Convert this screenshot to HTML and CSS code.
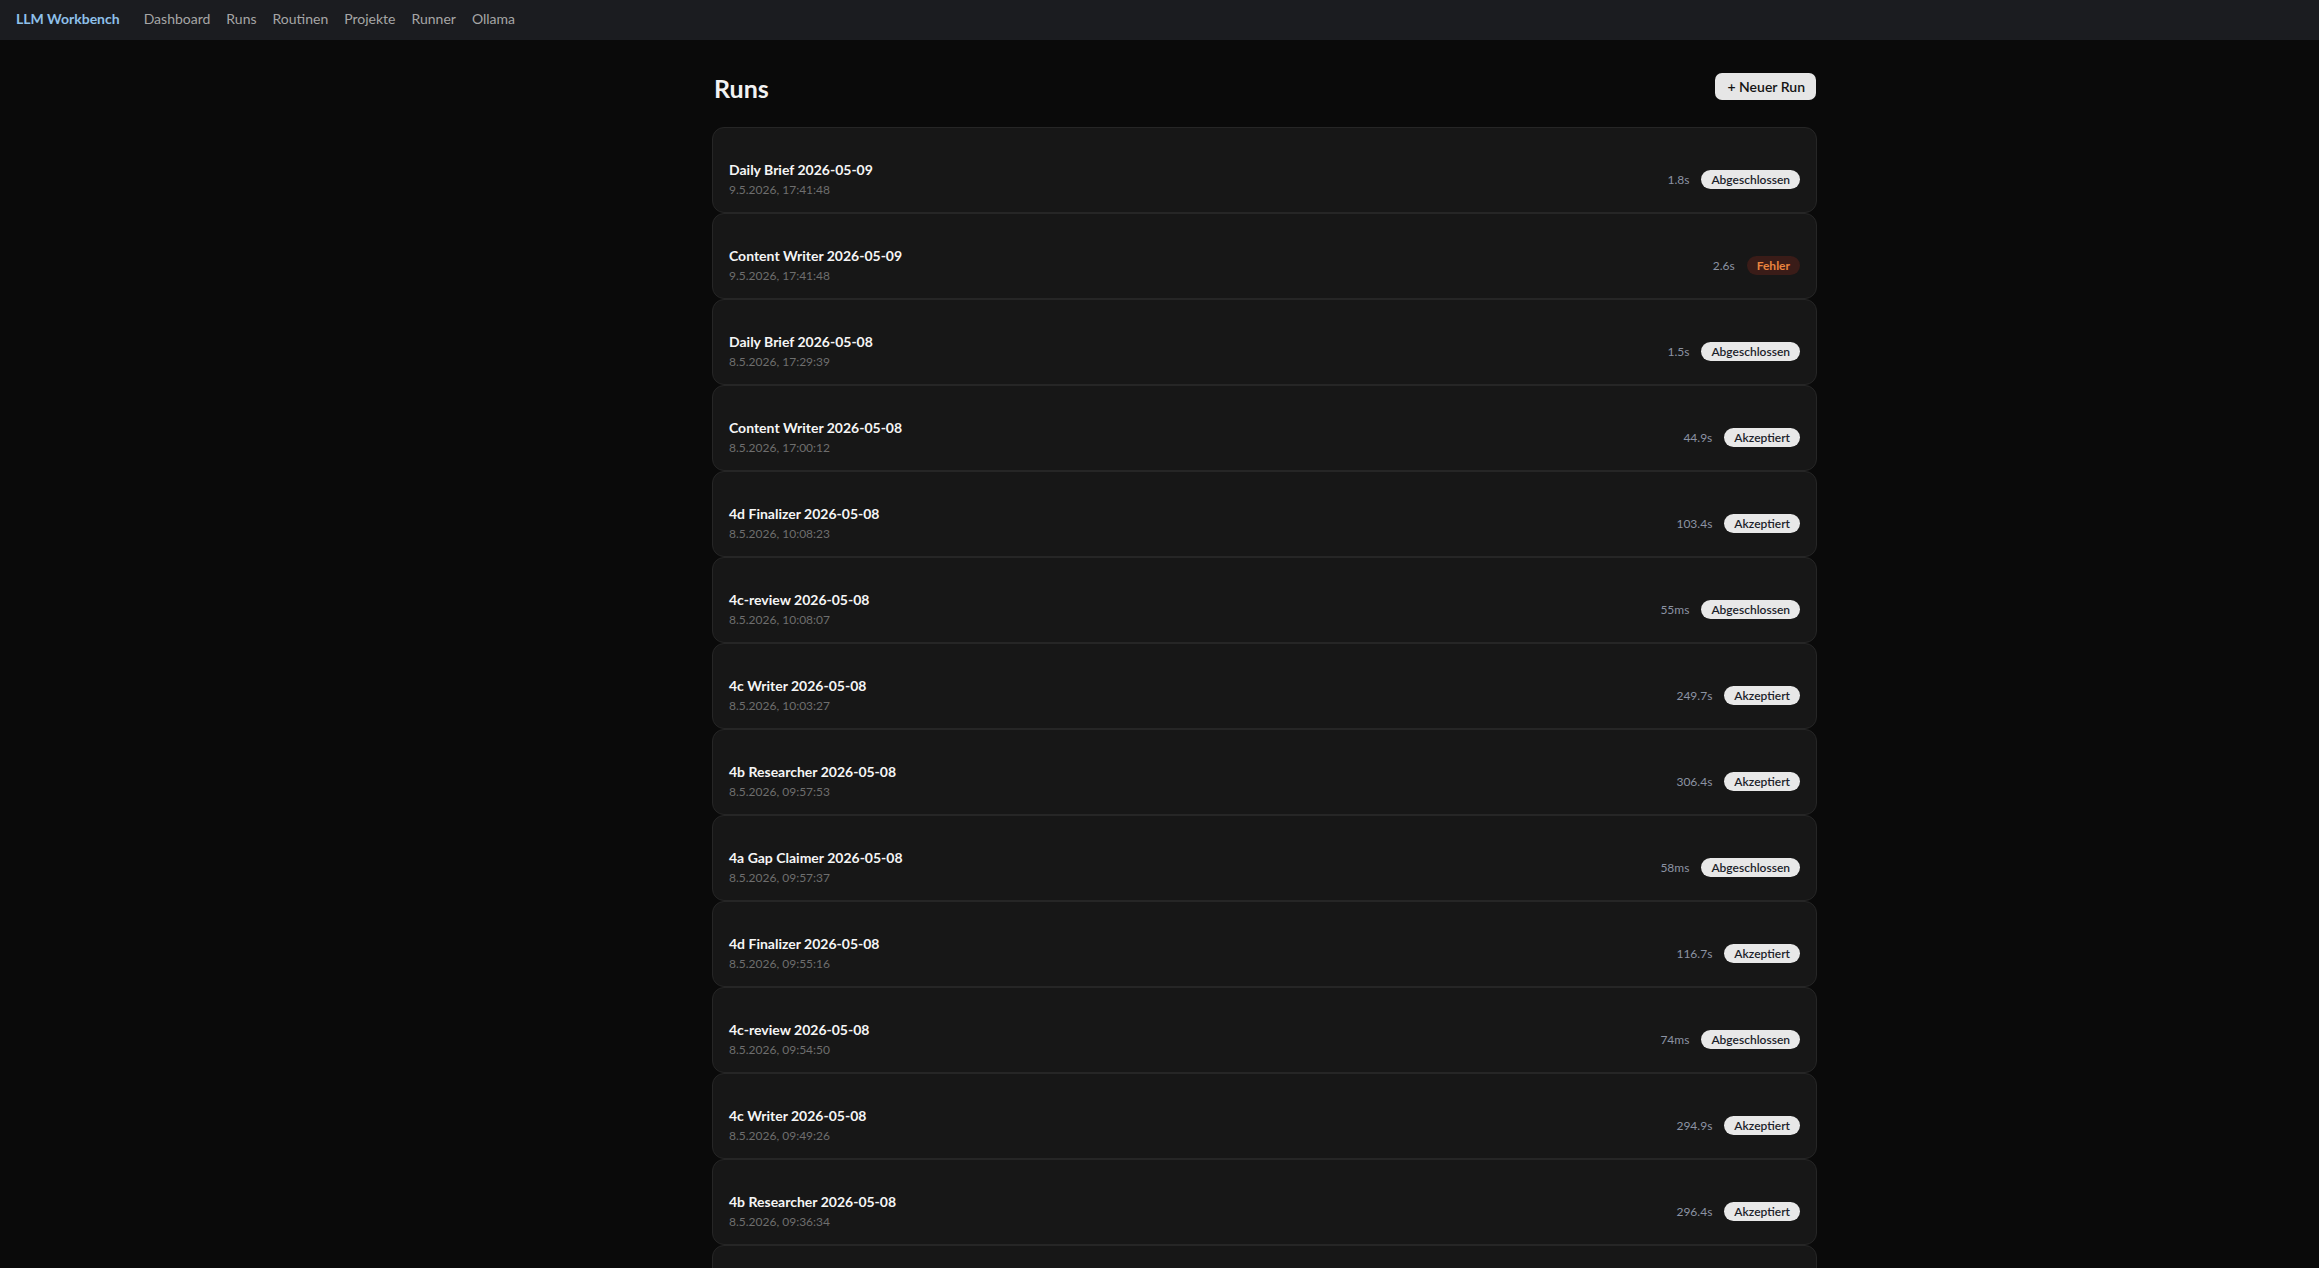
FILE: index.html
```html
<!DOCTYPE html>
<html lang="de">
<head>
<meta charset="utf-8">
<title>LLM Workbench – Runs</title>
<link rel="stylesheet" href="styles.css">
</head>
<body>
<nav class="topbar">
  <a class="brand" href="#">LLM Workbench</a>
  <a class="nav-link" href="#">Dashboard</a>
  <a class="nav-link" href="#">Runs</a>
  <a class="nav-link" href="#">Routinen</a>
  <a class="nav-link" href="#">Projekte</a>
  <a class="nav-link" href="#">Runner</a>
  <a class="nav-link" href="#">Ollama</a>
</nav>
<div class="layout">
  <aside class="side"></aside>
  <main class="main">
    <div class="container">
      <header class="page-head">
        <h1>Runs</h1>
        <button class="btn-new">+ Neuer Run</button>
      </header>
      <div class="run-list">
        <a class="run" href="#"><div class="run-info"><div class="run-title">Daily Brief 2026-05-09</div><div class="run-date">9.5.2026, 17:41:48</div></div><div class="run-meta"><span class="dur">1.8s</span><span class="badge">Abgeschlossen</span></div></a>
        <a class="run" href="#"><div class="run-info"><div class="run-title">Content Writer 2026-05-09</div><div class="run-date">9.5.2026, 17:41:48</div></div><div class="run-meta"><span class="dur">2.6s</span><span class="badge badge-error">Fehler</span></div></a>
        <a class="run" href="#"><div class="run-info"><div class="run-title">Daily Brief 2026-05-08</div><div class="run-date">8.5.2026, 17:29:39</div></div><div class="run-meta"><span class="dur">1.5s</span><span class="badge">Abgeschlossen</span></div></a>
        <a class="run" href="#"><div class="run-info"><div class="run-title">Content Writer 2026-05-08</div><div class="run-date">8.5.2026, 17:00:12</div></div><div class="run-meta"><span class="dur">44.9s</span><span class="badge">Akzeptiert</span></div></a>
        <a class="run" href="#"><div class="run-info"><div class="run-title">4d Finalizer 2026-05-08</div><div class="run-date">8.5.2026, 10:08:23</div></div><div class="run-meta"><span class="dur">103.4s</span><span class="badge">Akzeptiert</span></div></a>
        <a class="run" href="#"><div class="run-info"><div class="run-title">4c-review 2026-05-08</div><div class="run-date">8.5.2026, 10:08:07</div></div><div class="run-meta"><span class="dur">55ms</span><span class="badge">Abgeschlossen</span></div></a>
        <a class="run" href="#"><div class="run-info"><div class="run-title">4c Writer 2026-05-08</div><div class="run-date">8.5.2026, 10:03:27</div></div><div class="run-meta"><span class="dur">249.7s</span><span class="badge">Akzeptiert</span></div></a>
        <a class="run" href="#"><div class="run-info"><div class="run-title">4b Researcher 2026-05-08</div><div class="run-date">8.5.2026, 09:57:53</div></div><div class="run-meta"><span class="dur">306.4s</span><span class="badge">Akzeptiert</span></div></a>
        <a class="run" href="#"><div class="run-info"><div class="run-title">4a Gap Claimer 2026-05-08</div><div class="run-date">8.5.2026, 09:57:37</div></div><div class="run-meta"><span class="dur">58ms</span><span class="badge">Abgeschlossen</span></div></a>
        <a class="run" href="#"><div class="run-info"><div class="run-title">4d Finalizer 2026-05-08</div><div class="run-date">8.5.2026, 09:55:16</div></div><div class="run-meta"><span class="dur">116.7s</span><span class="badge">Akzeptiert</span></div></a>
        <a class="run" href="#"><div class="run-info"><div class="run-title">4c-review 2026-05-08</div><div class="run-date">8.5.2026, 09:54:50</div></div><div class="run-meta"><span class="dur">74ms</span><span class="badge">Abgeschlossen</span></div></a>
        <a class="run" href="#"><div class="run-info"><div class="run-title">4c Writer 2026-05-08</div><div class="run-date">8.5.2026, 09:49:26</div></div><div class="run-meta"><span class="dur">294.9s</span><span class="badge">Akzeptiert</span></div></a>
        <a class="run" href="#"><div class="run-info"><div class="run-title">4b Researcher 2026-05-08</div><div class="run-date">8.5.2026, 09:36:34</div></div><div class="run-meta"><span class="dur">296.4s</span><span class="badge">Akzeptiert</span></div></a>
        <a class="run" href="#"><div class="run-info"><div class="run-title">4a Gap Claimer 2026-05-08</div><div class="run-date">8.5.2026, 09:36:18</div></div><div class="run-meta"><span class="dur">61ms</span><span class="badge">Abgeschlossen</span></div></a>
      </div>
    </div>
  </main>
</div>
</body>
</html>
```
FILE: styles.css
```css
* { box-sizing: border-box; }
html, body { margin: 0; padding: 0; }
body {
  background: #0a0a0a;
  color: #ededed;
  font-family: "Segoe UI", Lato, "Noto Sans", sans-serif;
  min-height: 100vh;
}
a { text-decoration: none; color: inherit; }

.topbar {
  height: 40px;
  background: #1b1c20;
  display: flex;
  align-items: center;
  padding: 0 0 4px 16px;
  gap: 16px;
}
.brand {
  font-size: 14px;
  font-weight: 700;
  color: #8fc0ea;
  margin-right: 8px;
}
.nav-link {
  font-size: 14px;
  color: #a6a6a6;
}

.layout { display: flex; }
.side { width: 210px; flex: none; }
.main { flex: 1; padding: 30px 0 40px; }
.container { max-width: 1105px; margin: 0 auto; }

.page-head {
  display: flex;
  align-items: center;
  justify-content: space-between;
  margin-bottom: 25px;
}
.page-head h1 {
  margin: 0;
  font-size: 25px;
  line-height: 32px;
  font-weight: 700;
  color: #f2f2f2;
  padding: 2px 0 0 2px;
  height: 32px;
  box-sizing: content-box;
  margin-bottom: -2px;
}
.btn-new {
  font-family: inherit;
  font-size: 14px;
  font-weight: 600;
  color: #141414;
  background: #e6e6e6;
  border: none;
  border-radius: 7px;
  height: 27px;
  padding: 0 11px 0 12px;
  margin-right: 1px;
}

.run-list { display: flex; flex-direction: column; }
.run {
  display: flex;
  align-items: center;
  justify-content: space-between;
  height: 86px;
  padding: 32px 16px 14px;
  background: #171717;
  border: 1px solid #262626;
  border-radius: 12px;
}
.run-title {
  font-size: 14px;
  line-height: 20px;
  font-weight: 700;
  color: #f5f5f5;
}
.run-date {
  margin-top: 2px;
  font-size: 12px;
  line-height: 16px;
  color: #6e6e6e;
}
.run-meta {
  display: flex;
  align-items: center;
  gap: 12px;
}
.dur {
  font-size: 12px;
  color: #8c93a3;
}
.badge {
  font-size: 12px;
  font-weight: 600;
  line-height: 19px;
  height: 19px;
  padding: 0 10px;
  border-radius: 999px;
  background: #e8e8e8;
  color: #1c1f2b;
}
.badge-error {
  background: #3a1c18;
  color: #e9843f;
  font-weight: 700;
}
```
